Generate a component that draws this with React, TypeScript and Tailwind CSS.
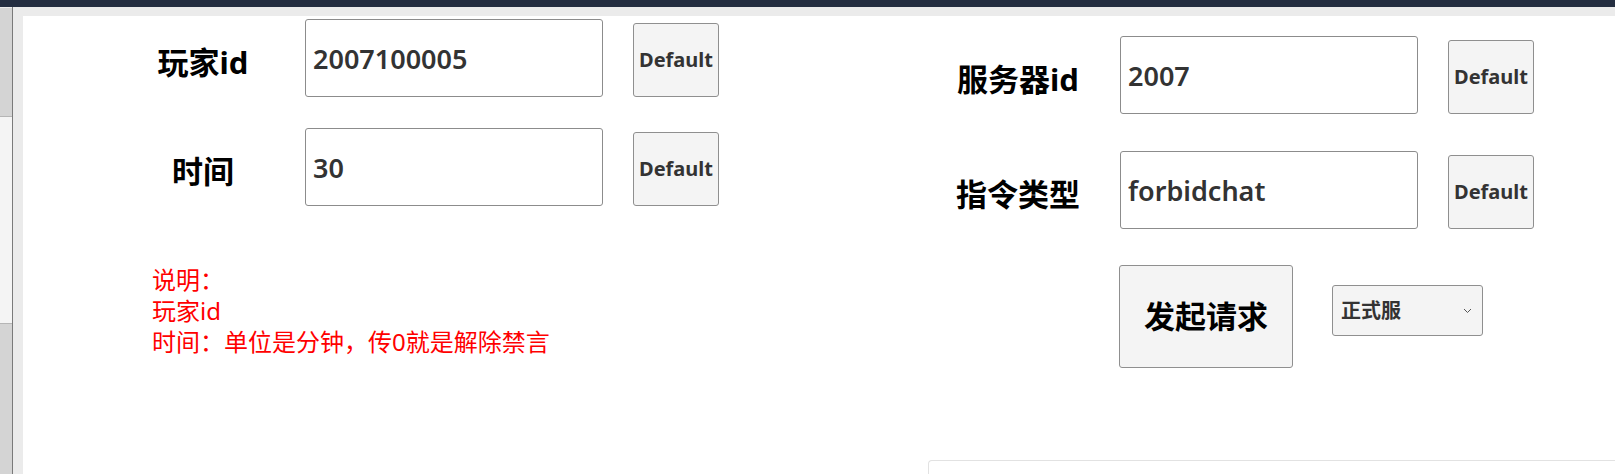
const font = { fontFamily: '"Noto Sans", "Noto Sans CJK SC", sans-serif' };

function Field({ label, value }: { label: string; value: string }) {
  return (
    <div className="flex items-end">
      <div className="ml-[90px] flex h-[78px] w-[180px] items-center justify-center pt-[8px] text-[31px] font-bold text-black">
        {label}
      </div>
      <input
        readOnly
        value={value}
        className="ml-[12px] h-[78px] w-[298px] rounded-[3px] border border-[#8c8c8c] bg-white px-[7px] text-[27px] font-semibold text-[#333] outline-none"
      />
      <button className="ml-[30px] h-[74px] w-[86px] rounded-[3px] border border-[#8f8f8f] bg-[#f4f4f4] text-[20px] font-bold text-[#333]">
        Default
      </button>
    </div>
  );
}

export default function App() {
  return (
    <div className="flex h-[474px] w-[1615px] flex-col overflow-hidden bg-[#ebebeb]" style={font}>
      <div className="h-[7px] shrink-0 bg-[#232d40]" />
      <div className="flex flex-1">
        {/* side rail */}
        <div className="flex w-[13px] flex-col border-r border-[#7a7a7a]">
          <div className="mt-[1px] h-[109px] border-b border-[#b5b5b5] bg-[#d4d4d4]" />
          <div className="h-[207px] border-b border-[#b5b5b5] bg-[#f4f4f4]" />
          <div className="flex-1 bg-[#d4d4d4]" />
        </div>
        <div className="flex flex-1 flex-col pl-[10px] pt-[9px]">
          <div className="flex flex-1 bg-white">
            {/* left half */}
            <div className="w-[815px] shrink-0">
              <div className="mt-[3px]">
                <Field label="玩家id" value="2007100005" />
              </div>
              <div className="mt-[31px]">
                <Field label="时间" value="30" />
              </div>
              <div className="ml-[129px] mt-[58px] text-[24px] leading-[31px] text-[#ff0000]">
                <div>说明：</div>
                <div>玩家id</div>
                <div>时间：单位是分钟，传0就是解除禁言</div>
              </div>
            </div>
            {/* right half */}
            <div className="flex flex-1 flex-col">
              <div className="mt-[20px]">
                <Field label="服务器id" value="2007" />
              </div>
              <div className="mt-[37px]">
                <Field label="指令类型" value="forbidchat" />
              </div>
              <div className="ml-[281px] mt-[36px] flex items-start">
                <button className="h-[103px] w-[174px] rounded-[3px] border border-[#8f8f8f] bg-[#f4f4f4] text-[31px] font-bold text-black">
                  发起请求
                </button>
                <div className="ml-[39px] mt-[20px] flex h-[51px] w-[151px] items-center justify-between rounded-[3px] border border-[#8f8f8f] bg-[#f4f4f4] pl-[8px] pr-[10px]">
                  <span className="text-[20px] font-bold text-[#333]">正式服</span>
                  <svg width="9" height="6" viewBox="0 0 9 6" fill="none">
                    <path d="M1 1l3.5 3.5L8 1" stroke="#555" strokeWidth="1" />
                  </svg>
                </div>
              </div>
              <div className="ml-[90px] mt-[92px] h-[40px] rounded-tl-[4px] border-l border-t border-[#e2e2e2]" />
            </div>
          </div>
        </div>
      </div>
    </div>
  );
}
